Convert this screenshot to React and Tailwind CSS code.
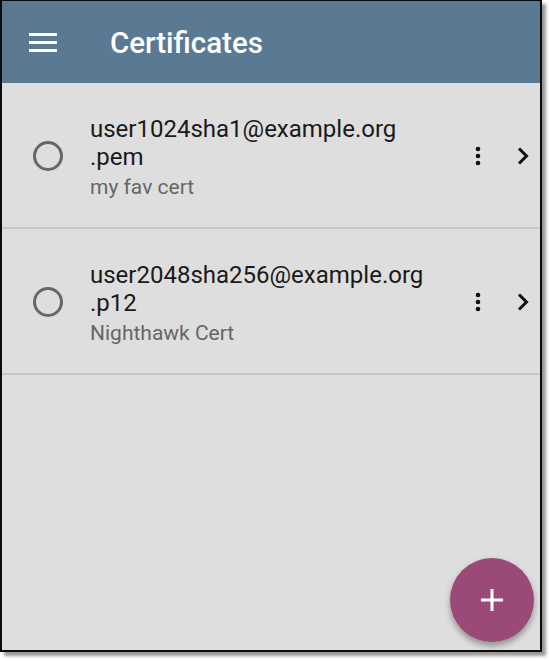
import React from 'react';

const certs = [
  { name: 'user1024sha1@example.org', ext: '.pem', note: 'my fav cert' },
  { name: 'user2048sha256@example.org', ext: '.p12', note: 'Nighthawk Cert' },
];

function Radio() {
  return (
    <svg width="32" height="32" viewBox="0 0 32 32">
      <circle cx="16" cy="16" r="13.5" fill="none" stroke="#676767" strokeWidth="3" />
    </svg>
  );
}

function Kebab() {
  return (
    <svg width="8" height="20" viewBox="0 0 8 20">
      <circle cx="4" cy="3" r="2.3" fill="#111" />
      <circle cx="4" cy="10" r="2.3" fill="#111" />
      <circle cx="4" cy="17" r="2.3" fill="#111" />
    </svg>
  );
}

function Chevron() {
  return (
    <svg width="14" height="20" viewBox="0 0 14 20">
      <path d="M3 2.5 L10.5 10 L3 17.5" fill="none" stroke="#111" strokeWidth="3" />
    </svg>
  );
}

function CertRow({ cert }) {
  return (
    <div className="flex items-center border-b-2 border-[#c6c6c6] pt-[32px] pb-[24px]">
      <div className="w-[88px] flex justify-center pl-[4px] shrink-0 mb-[7px]">
        <Radio />
      </div>
      <div className="flex-1 text-[#1a1a1a]">
        <div className="text-[24px] leading-[28px]">{cert.name}</div>
        <div className="text-[24px] leading-[28px]">{cert.ext}</div>
        <div className="text-[21px] leading-[32px] text-[#666]">{cert.note}</div>
      </div>
      <div className="flex items-center gap-[34px] pr-[10px] mb-[6px]">
        <Kebab />
        <Chevron />
      </div>
    </div>
  );
}

export default function App() {
  return (
    <div className="w-[549px] h-[661px] bg-white" style={{ fontFamily: 'Roboto, "Liberation Sans", sans-serif' }}>
      <div className="relative w-[542px] h-[652px] border-2 border-t border-[#0a0a0a] bg-[#dedede] shadow-[4px_4px_3px_rgba(0,0,0,0.4)] overflow-hidden">
        <div className="h-[82px] bg-[#5a7a93] flex items-center">
          <div className="pl-[27px] w-[108px] flex flex-col gap-[5px]">
            <div className="w-[28px] h-[3px] bg-white" />
            <div className="w-[28px] h-[3px] bg-white" />
            <div className="w-[28px] h-[3px] bg-white" />
          </div>
          <div className="text-white text-[29.5px] font-medium leading-none pt-[3px]">Certificates</div>
        </div>
        {certs.map((c) => (
          <CertRow key={c.name} cert={c} />
        ))}
        <button className="absolute right-[6px] bottom-[8px] w-[84px] h-[84px] rounded-full bg-[#9b4a78] flex items-center justify-center shadow-[0_4px_6px_rgba(0,0,0,0.35)]">
          <svg width="22" height="22" viewBox="0 0 22 22">
            <path d="M11 0 V22 M0 11 H22" stroke="#fff" strokeWidth="3" />
          </svg>
        </button>
      </div>
    </div>
  );
}
